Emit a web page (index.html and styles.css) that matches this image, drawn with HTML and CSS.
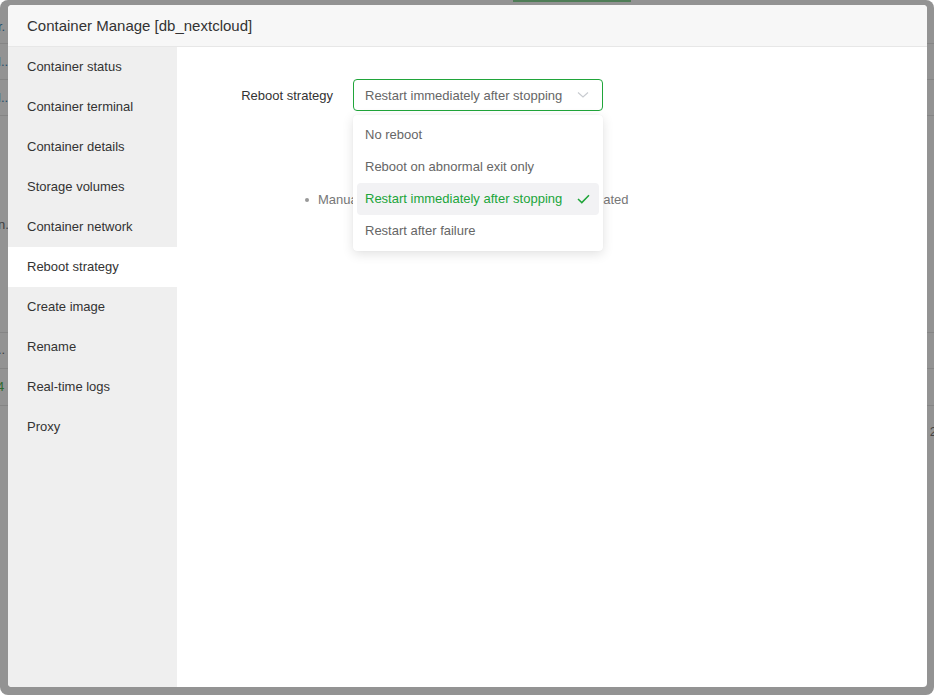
FILE: index.html
```html
<!DOCTYPE html>
<html lang="en">
<head>
<meta charset="utf-8">
<title>Container Manage</title>
<link rel="stylesheet" href="styles.css">
</head>
<body>
<div class="window">
  <div class="backdrop">
    <div class="bd-bar"></div>
    <div class="bd-line" style="top:43px"></div>
    <div class="bd-line" style="top:79px"></div>
    <div class="bd-line" style="top:115px"></div>
    <div class="bd-line" style="top:332px"></div>
    <div class="bd-line" style="top:368px"></div>
    <div class="bd-line" style="top:405px"></div>
    <span class="bd-txt blue" style="top:19px">r.</span>
    <span class="bd-txt blue" style="top:54px">l..</span>
    <span class="bd-txt blue" style="top:90px">l..</span>
    <span class="bd-txt" style="top:217px">n.</span>
    <span class="bd-txt" style="top:342px">..</span>
    <span class="bd-txt green" style="top:379px">4</span>
    <span class="bd-txt right" style="top:424px">2</span>
  </div>

  <div class="modal">
    <div class="modal-header">Container Manage [db_nextcloud]</div>
    <div class="modal-body">
      <nav class="sidebar">
        <div class="nav-item">Container status</div>
        <div class="nav-item">Container terminal</div>
        <div class="nav-item">Container details</div>
        <div class="nav-item">Storage volumes</div>
        <div class="nav-item">Container network</div>
        <div class="nav-item active">Reboot strategy</div>
        <div class="nav-item">Create image</div>
        <div class="nav-item">Rename</div>
        <div class="nav-item">Real-time logs</div>
        <div class="nav-item">Proxy</div>
      </nav>
      <main class="content">
        <div class="form-row">
          <label class="form-label">Reboot strategy</label>
          <div class="select-wrap">
            <div class="select">
              <span class="select-value">Restart immediately after stopping</span>
              <svg class="chevron" width="12" height="8" viewBox="0 0 12 8"><path d="M1 1.5 L6 6 L11 1.5" fill="none" stroke="#c8cbd0" stroke-width="1.1"/></svg>
            </div>
            <div class="dropdown">
              <div class="opt">No reboot</div>
              <div class="opt">Reboot on abnormal exit only</div>
              <div class="opt selected">Restart immediately after stopping
                <svg class="check" width="13" height="10" viewBox="0 0 13 10"><path d="M1 5 L4.8 8.6 L12 1.2" fill="none" stroke="#20a53a" stroke-width="1.5"/></svg>
              </div>
              <div class="opt">Restart after failure</div>
            </div>
          </div>
        </div>
        <ul class="tips">
          <li><span class="dot"></span>Manually stopped containers stay off unless recreated</li>
        </ul>
      </main>
    </div>
  </div>
</div>
</body>
</html>
```

FILE: styles.css
```css
* { box-sizing: border-box; }
html, body { margin: 0; padding: 0; }
body {
  width: 934px;
  height: 695px;
  background: #ffffff;
  font-family: "Liberation Sans", Arial, sans-serif;
  font-size: 13px;
  color: #333;
  overflow: hidden;
}
.window {
  position: relative;
  width: 934px;
  height: 695px;
  background: #939393;
  border-radius: 8px;
  overflow: hidden;
}
.backdrop { position: absolute; inset: 0; }
.bd-bar {
  position: absolute; left: 513px; top: 0; width: 118px; height: 2px;
  background: #4f7d57;
}
.bd-line {
  position: absolute; left: 0; right: 0; height: 1px; background: #858585;
}
.bd-txt {
  position: absolute; left: -2px; font-size: 13px; line-height: 16px; color: #3e3e3e;
}
.bd-txt.blue { color: #1f4f6e; }
.bd-txt.green { color: #2f6a2f; left: -3px; }
.bd-txt.right { left: auto; right: -3px; color: #444; }

.modal {
  position: absolute;
  left: 8px; top: 5px;
  width: 919px; height: 682px;
  background: #fff;
  border-radius: 4px;
  overflow: hidden;
  display: flex;
  flex-direction: column;
}
.modal-header {
  height: 42px;
  flex: none;
  background: #f7f7f7;
  border-bottom: 1px solid #e7e7e7;
  padding-left: 19px;
  font-size: 15px;
  line-height: 41px;
  color: #333;
}
.modal-body { flex: 1; display: flex; min-height: 0; }
.sidebar {
  width: 169px;
  flex: none;
  background: #efefef;
}
.nav-item {
  height: 40px;
  line-height: 40px;
  padding-left: 19px;
  color: #333;
  font-size: 13px;
}
.nav-item.active { background: #fff; }

.content {
  flex: 1;
  padding-top: 32px;
}
.form-row { display: flex; align-items: center; }
.form-label {
  width: 156px;
  text-align: right;
  margin-right: 20px;
  color: #333;
  font-size: 13px;
}
.select-wrap { position: relative; width: 250px; }
.select {
  height: 32px;
  border: 1px solid #20a53a;
  border-radius: 4px;
  display: flex;
  align-items: center;
  padding: 0 11px;
  justify-content: space-between;
}
.select-value { color: #666; font-size: 13px; }
.chevron { margin-right: 2px; }
.dropdown {
  position: absolute;
  left: 0; top: 36px;
  width: 250px;
  background: #fff;
  border-radius: 4px;
  padding: 4px;
  box-shadow: 0 3px 12px rgba(0,0,0,0.12), 0 0 1px rgba(0,0,0,0.08);
  z-index: 5;
}
.opt {
  height: 32px;
  line-height: 32px;
  padding: 0 8px;
  color: #666;
  font-size: 13px;
  border-radius: 4px;
  display: flex;
  align-items: center;
  justify-content: space-between;
}
.opt.selected { background: #f2f2f4; color: #20a53a; }
.check { margin-right: 1px; }

.tips {
  list-style: none;
  margin: 79px 0 0 128px;
  padding: 0;
}
.tips li {
  display: flex;
  align-items: center;
  line-height: 20px;
  color: #777;
  font-size: 13px;
}
.dot {
  width: 4px; height: 4px; border-radius: 50%;
  background: #999;
  margin-right: 9px;
}
```
